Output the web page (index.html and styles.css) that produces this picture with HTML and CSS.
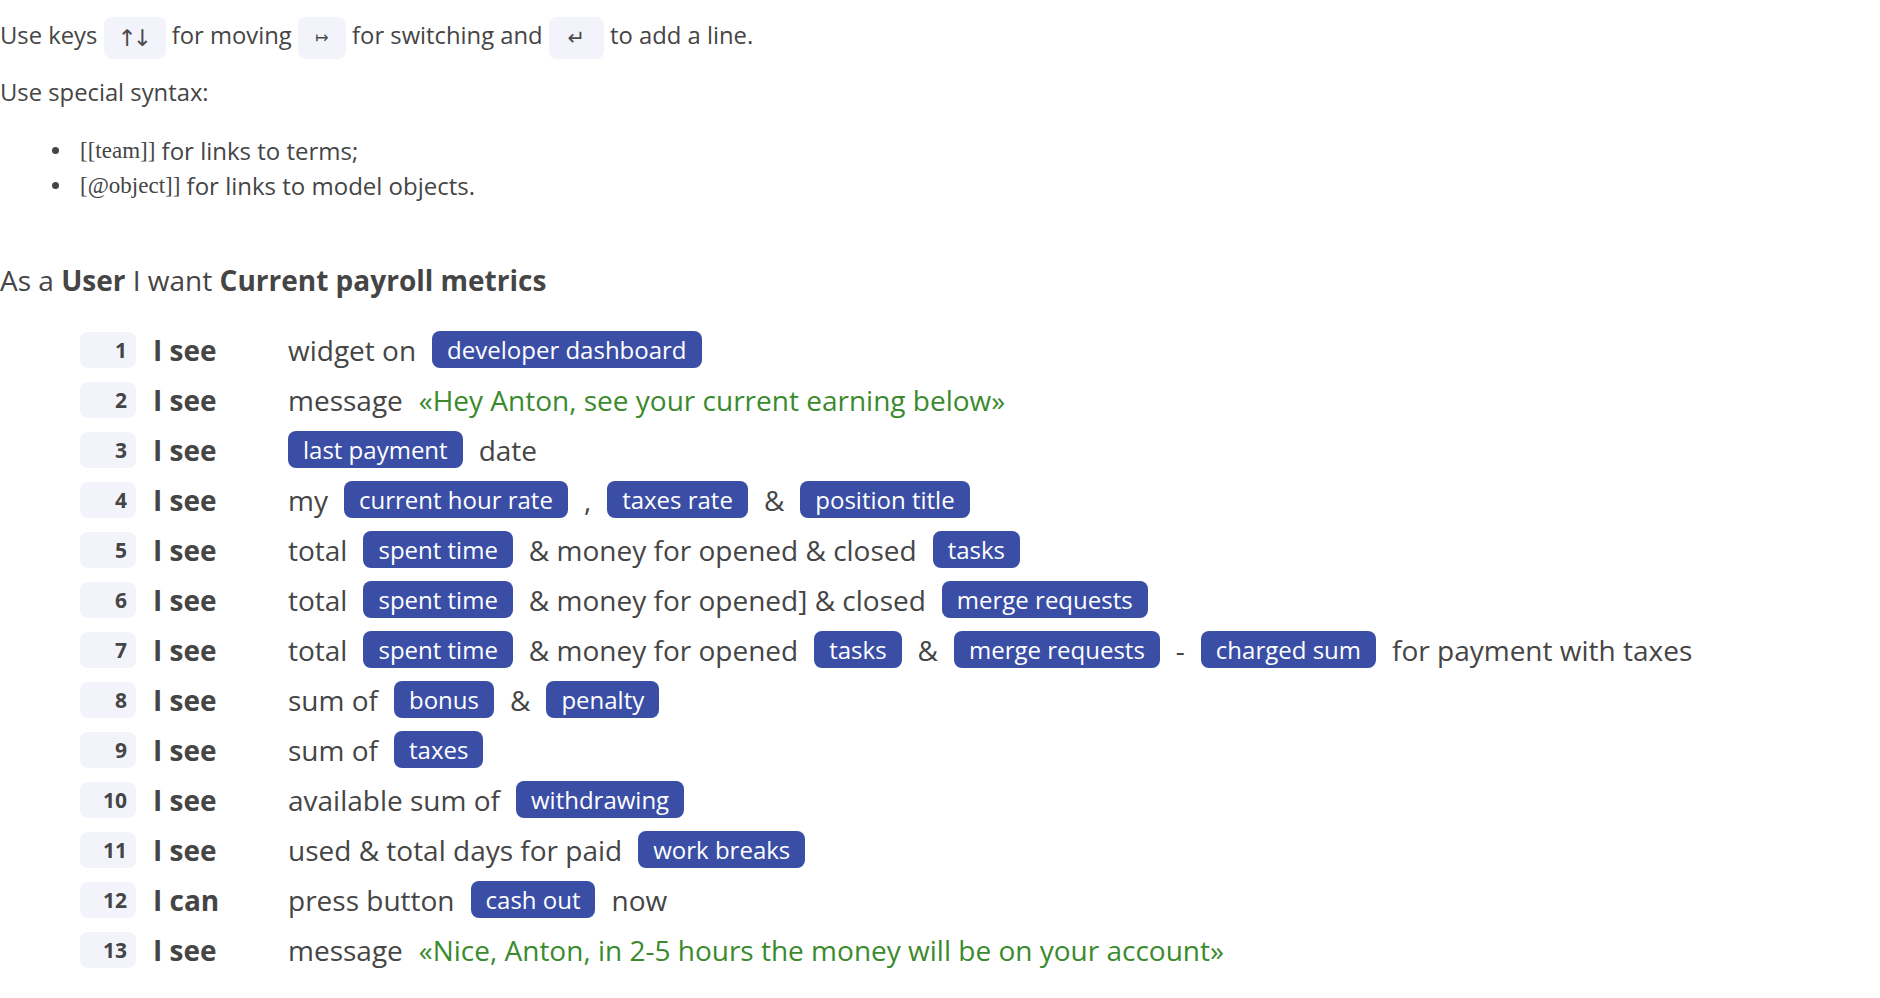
FILE: index.html
```html
<!DOCTYPE html>
<html lang="en">
<head>
<meta charset="utf-8">
<title>Story</title>
<link rel="stylesheet" href="styles.css">
</head>
<body>
<div class="page">
  <p class="hint hint-keys">Use keys <kbd class="key key-updown">↑↓</kbd> for moving <kbd class="key key-tab">↦</kbd> for switching and <kbd class="key key-enter">↵</kbd> to add a line.</p>
  <p class="hint">Use special syntax:</p>
  <ul class="syntax">
    <li><span class="code">[[team]]</span>&nbsp;for links to terms;</li>
    <li><span class="code">[@object]]</span>&nbsp;for links to model objects.</li>
  </ul>

  <h2 class="story">As a <b>User</b> I want <b>Current payroll metrics</b></h2>

  <div class="steps">
    <div class="step"><span class="num">1</span><span class="verb">I see</span><div class="body"><span>widget on</span><span class="chip">developer dashboard</span></div></div>
    <div class="step"><span class="num">2</span><span class="verb">I see</span><div class="body"><span>message</span><span class="quote">«Hey Anton, see your current earning below»</span></div></div>
    <div class="step"><span class="num">3</span><span class="verb">I see</span><div class="body"><span class="chip">last payment</span><span>date</span></div></div>
    <div class="step"><span class="num">4</span><span class="verb">I see</span><div class="body"><span>my</span><span class="chip">current hour rate</span><span>,</span><span class="chip">taxes rate</span><span>&amp;</span><span class="chip">position title</span></div></div>
    <div class="step"><span class="num">5</span><span class="verb">I see</span><div class="body"><span>total</span><span class="chip">spent time</span><span>&amp; money for opened &amp; closed</span><span class="chip">tasks</span></div></div>
    <div class="step"><span class="num">6</span><span class="verb">I see</span><div class="body"><span>total</span><span class="chip">spent time</span><span>&amp; money for opened] &amp; closed</span><span class="chip">merge requests</span></div></div>
    <div class="step"><span class="num">7</span><span class="verb">I see</span><div class="body"><span>total</span><span class="chip">spent time</span><span>&amp; money for opened</span><span class="chip">tasks</span><span>&amp;</span><span class="chip">merge requests</span><span>-</span><span class="chip">charged sum</span><span>for payment with taxes</span></div></div>
    <div class="step"><span class="num">8</span><span class="verb">I see</span><div class="body"><span>sum of</span><span class="chip">bonus</span><span>&amp;</span><span class="chip">penalty</span></div></div>
    <div class="step"><span class="num">9</span><span class="verb">I see</span><div class="body"><span>sum of</span><span class="chip">taxes</span></div></div>
    <div class="step"><span class="num">10</span><span class="verb">I see</span><div class="body"><span>available sum of</span><span class="chip">withdrawing</span></div></div>
    <div class="step"><span class="num">11</span><span class="verb">I see</span><div class="body"><span>used &amp; total days for paid</span><span class="chip">work breaks</span></div></div>
    <div class="step"><span class="num">12</span><span class="verb">I can</span><div class="body"><span>press button</span><span class="chip">cash out</span><span>now</span></div></div>
    <div class="step"><span class="num">13</span><span class="verb">I see</span><div class="body"><span>message</span><span class="quote">«Nice, Anton, in 2-5 hours the money will be on your account»</span></div></div>
  </div>
</div>
</body>
</html>
```

FILE: styles.css
```css
html, body {
  margin: 0;
  padding: 0;
  background: #ffffff;
}

body {
  font-family: "Open Sans", "Liberation Sans", sans-serif;
  color: #454545;
}

.page {
  padding-top: 14px;
}

.hint {
  margin: 0;
  font-size: 23.8px;
  line-height: 36px;
}

.hint-keys {
  line-height: 42px;
  margin-bottom: 15px;
}

.key {
  display: inline-block;
  vertical-align: middle;
  box-sizing: border-box;
  height: 42px;
  line-height: 42px;
  padding: 0;
  text-align: center;
  border-radius: 8px;
  background: #f3f3fb;
  font-family: "DejaVu Sans", sans-serif;
  color: #4a4a4a;
}

.key-updown {
  width: 62px;
  font-size: 23px;
  letter-spacing: -4px;
  text-indent: -4px;
}

.key-tab {
  width: 48px;
  font-size: 16px;
}

.key-enter {
  width: 55px;
  font-size: 21px;
}

.syntax {
  margin: 23px 0 0;
  padding-left: 52px;
  list-style: none;
  font-size: 24px;
  line-height: 35px;
}

.syntax li {
  display: flex;
  align-items: center;
  height: 35px;
}

.syntax li::before {
  content: "";
  flex: none;
  width: 7px;
  height: 7px;
  margin-right: 21px;
  border-radius: 50%;
  background: #454545;
}

.code {
  font-family: "Liberation Serif", serif;
  font-size: 23px;
  line-height: 1;
}

.story {
  margin: 59px 0 0;
  font-size: 28px;
  line-height: 36px;
  font-weight: 400;
}

.story b {
  font-weight: 700;
}

.steps {
  margin-top: 27px;
  padding-left: 80px;
}

.step {
  display: flex;
  align-items: center;
  height: 50px;
}

.num {
  box-sizing: border-box;
  width: 56px;
  height: 36px;
  line-height: 36px;
  padding-right: 9px;
  text-align: right;
  border-radius: 8px;
  background: #f3f4fb;
  font-size: 21px;
  font-weight: 700;
  flex: none;
}

.verb {
  width: 118px;
  margin-left: 17px;
  margin-right: 17px;
  font-size: 28px;
  font-weight: 700;
  flex: none;
}

.body {
  display: flex;
  align-items: center;
  gap: 16px;
  font-size: 28px;
  white-space: nowrap;
}

.chip {
  display: inline-block;
  height: 37px;
  line-height: 37px;
  padding: 0 15px;
  border-radius: 8px;
  background: #3a4ea6;
  color: #ffffff;
  font-size: 24px;
}

.quote {
  color: #3b8a2d;
}
```
